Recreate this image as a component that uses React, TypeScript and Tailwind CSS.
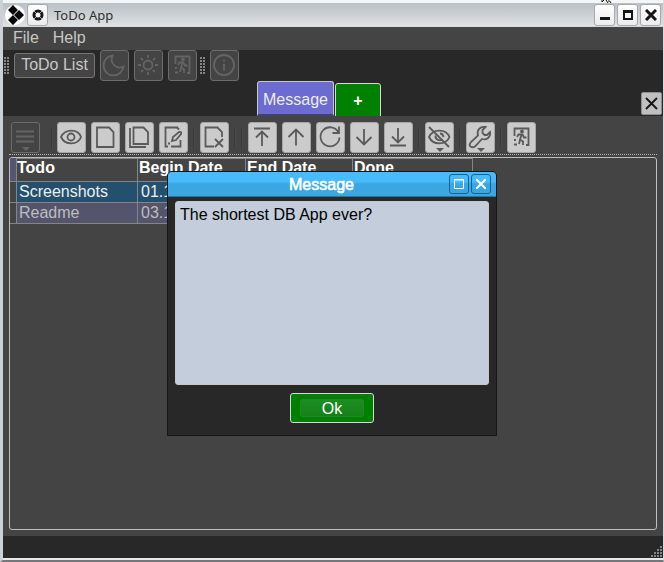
import type { ReactNode } from "react";

const drawings: Record<string, ReactNode> = {
  moon: <path d="M12.5 5.5A10 10 0 1 0 23.5 16.5C17 20 9 13 12.5 5.5z" />,
  sun: (
    <>
      <circle cx="14" cy="15" r="4.5" />
      <path d="M14 5v3M14 22v3M4 15h3M21 15h3M7 8l2 2M19 20l2 2M21 8l-2 2M9 20l-2 2" />
    </>
  ),
  exit: (
    <>
      <path d="M7.5 14V6.5h14V23H19M7 18h2M7 22.5h3" />
      <path d="M10 15l1.5-2.5h4l1.500 3h2.500M14.500 13L13 17.500l3 2V23M13 18l-1 4" />
      <circle cx="15" cy="9.500" r="1" />
    </>
  ),
  info: (
    <>
      <circle cx="14" cy="15" r="10" />
      <path d="M14 14v6.500M14 9.500v2" />
    </>
  ),
  list: (
    <>
      <path d="M5 9.500h18M5 14.500h18M5 19.500h18" />
      <path d="M11 25h8l-4 4z" fill="currentColor" stroke="none" />
    </>
  ),
  eye: (
    <>
      <path d="M4 15C8 6.500 21 6.500 24 15C21 23.500 8 23.500 4 15z" />
      <circle cx="14" cy="15" r="3.500" />
    </>
  ),
  page: <path d="M6 5.500h12l4.500 4.500v15H6z" />,
  pages: <path d="M8.500 5.500h10l4.500 4.500v12H8.500zM5 6v19h16" />,
  edit: (
    <>
      <path d="M19 5.500H6.500v19H9M12 24.500h9.500V18M18 5.500l2 2M9 21.500h2" />
      <path d="M13 19l1-4 6-5q3-.500 2 2l-5 6z" />
    </>
  ),
  remove: <path d="M14 24.500H5.500v-19h12l4.500 4.500v5M15 17l8 8M23 17l-8 8" />,
  top: <path d="M6 6.500h16M14 24V10M8 15.500l6-6 6 6" />,
  up: <path d="M14 23.500V8M6.500 15L14 7.500l7.500 7.500" />,
  refresh: <path d="M22.500 10.500a9.500 9.500 0 1 0 1 5M23 4.500v6.500h-6.500" />,
  down: <path d="M14 7v15.500M6.500 15l7.500 7.500 7.500-7.500" />,
  bottom: <path d="M14 6v14M8 14.500l6 6 6-6M6 23.500h16" />,
  hide: (
    <>
      <path d="M4 15C8 6.500 21 6.500 24.500 15C21 23.500 8 23.500 4 15zM4 5l20 20" />
      <path d="M10.500 13.500c-.500 4 4 6 7 4M15 11.500q3 0 3.500 3.500" />
      <path d="M11 26h8l-4 4z" fill="currentColor" stroke="none" />
    </>
  ),
  tool: (
    <>
      <path d="M12 13.500C10.500 8 14 4 19.500 5L16.500 8v3l2 2h2.500l3-3C25 15 20.500 18.500 16 17L9 24.500Q6.500 26 4.500 24.500t.500-4.500z" />
      <path d="M11 26h8l-4 4z" fill="currentColor" stroke="none" />
    </>
  ),
};

function ToolButton({ icon, label, dark = false }: { icon: string; label: string; dark?: boolean }) {
  return (
    <button
      type="button"
      aria-label={label}
      className={`h-[31px] w-[29px] shrink-0 rounded-[3px] border ${
        dark ? "border-[#6c6c6c] bg-[#444] text-[#646464]" : "border-[#a6a6a6] bg-[#cbcbcb] text-[#5a5a5a]"
      }`}
    >
      <svg viewBox="1 1 27 29" className="h-full w-full" fill="none" stroke="currentColor" strokeWidth="1.8">
        {drawings[icon]}
      </svg>
    </button>
  );
}

function Divider() {
  return <span className="h-5 w-[2px] shrink-0 border-l border-[#393939] bg-[#4a4a4a]" />;
}

function Grip() {
  return (
    <svg className="h-[18px] w-[6px] shrink-0" viewBox="0 0 6 18" aria-hidden="true">
      {[0, 3, 6, 9, 12, 15].map((y) => (
        <path key={y} d={`M0 ${y}h2v2h-2zM3 ${y}h2v2h-2z`} fill="#858585" />
      ))}
    </svg>
  );
}

const frameButton =
  "flex h-[22px] w-[21px] items-center justify-center rounded-[3px] border border-[#a4aab0] bg-linear-to-b from-white to-[#ececec] text-[#151515]";

function TitleBar() {
  return (
    <header className="flex h-[27px] shrink-0 items-center border-t-[3px] border-b border-t-[#f4f5f6] border-b-[#d5dadd] bg-linear-to-b from-[#b9c0c6] to-[#dfe1e3] px-[2px]">
      <svg viewBox="0 0 20 20" className="size-5" aria-hidden="true">
        <circle cx="10" cy="10" r="10" fill="#fff" />
        <path d="M8 0l5 5-5 5-5-5zM14 5l5 5-5 5-5-5zM8 10l5 5-5 5-5-5z" fill="#050505" />
      </svg>
      <button type="button" aria-label="Window menu" className={`${frameButton} ml-[2px]`}>
        <svg viewBox="0 0 12 12" className="size-3" fill="none" stroke="currentColor">
          <circle cx="6" cy="6" r="4" strokeWidth="3" />
          <path d="M2 2l2 2M10 2L8 4M2 10l2-2M10 10L8 8" stroke="#aaa" />
        </svg>
      </button>
      <h1 className="ml-[6px] grow pt-[2px] font-['Noto_Sans',sans-serif] text-[13px] text-[#303030]">ToDo App</h1>
      <div className="flex gap-[2px]">
        <button type="button" aria-label="Minimize" className={frameButton}>
          <svg viewBox="0 0 12 12" className="size-3"><path d="M1 8h10v3H1z" fill="currentColor" /></svg>
        </button>
        <button type="button" aria-label="Maximize" className={frameButton}>
          <svg viewBox="0 0 12 12" className="size-3" fill="none" stroke="currentColor" strokeWidth="2">
            <path d="M2 2h8v8H2zM1 3h10" />
          </svg>
        </button>
        <button type="button" aria-label="Close" className={frameButton}>
          <svg viewBox="0 0 12 12" className="size-3" stroke="currentColor" strokeWidth="3"><path d="M1 1l10 10M11 1L1 11" /></svg>
        </button>
      </div>
      <svg viewBox="0 0 12 4" className="absolute top-0 right-[50px] h-1 w-3" fill="none" stroke="#151515" aria-hidden="true">
        <path d="M1 0v2l2-2M5 0l2 3M7 1q2-1 3 2" />
      </svg>
    </header>
  );
}

const headCell = "border-t border-r border-b border-[#858585] text-left align-top leading-[18px] font-bold text-white";
const cell = "border-r border-b border-[#858585] pl-[2px] leading-5";
const dateCell = "border-r border-b border-[#858585] pl-[3px] leading-5";

function TodoTable() {
  return (
    <table className="w-[463px] table-fixed border-separate border-spacing-0">
      <colgroup>
        <col className="w-[7px]" />
        <col className="w-[121px]" />
        <col className="w-[108px]" />
        <col className="w-[107px]" />
        <col className="w-[120px]" />
      </colgroup>
      <thead>
        <tr className="h-6">
          <td className="border-r border-b border-[#858585] bg-[#565670]" />
          <th className={headCell}>Todo</th>
          <th className={`${headCell} pl-px`}>Begin Date</th>
          <th className={`${headCell} pl-px`}>End Date</th>
          <th className={`${headCell} pl-px`}>Done</th>
        </tr>
      </thead>
      <tbody>
        <tr className="h-[21px] bg-[#22506e] text-[#eee]">
          <td className="border-r border-b border-[#858585] bg-[#444]" />
          <td className={cell}>Screenshots</td>
          <td className={dateCell}>01.11.2024</td>
          <td className={cell} />
          <td className={cell} />
        </tr>
        <tr className="h-[21px] bg-[#54546c] text-[#bdbdbd]">
          <td className="border-r border-b border-[#858585] bg-[#444]" />
          <td className={cell}>Readme</td>
          <td className={dateCell}>03.11.2024</td>
          <td className={cell} />
          <td className={cell} />
        </tr>
      </tbody>
    </table>
  );
}

function MessageDialog() {
  const control = "flex size-5 items-center justify-center rounded-[3px] border border-[#176292] text-white";
  return (
    <div className="absolute inset-x-0 top-[171px] flex justify-center pr-[2px]">
      <section
        role="dialog"
        aria-labelledby="dialog-title"
        className="w-[330px] overflow-hidden rounded-t-[5px] border border-[#151515] bg-[#282828]"
      >
        <div className="flex h-[25px] items-center gap-[2px] border-b border-[#2377a8] bg-linear-to-b from-[#48bbfc] from-40% to-[#3ba7e2] to-50% pr-[5px] pl-7">
          <h2 id="dialog-title" className="grow pt-px text-center text-base text-white [-webkit-text-stroke:0.6px_white]">
            Message
          </h2>
          <button type="button" aria-label="Maximize dialog" className={control}>
            <svg viewBox="0 0 10 10" className="size-[10px]" fill="none" stroke="currentColor"><path d="M.5 .5h9v9h-9zM0 1h10" /></svg>
          </button>
          <button type="button" aria-label="Close dialog" className={control}>
            <svg viewBox="0 0 10 10" className="size-[10px]" stroke="currentColor" strokeWidth="2"><path d="M0 0l10 10M10 0L0 10" /></svg>
          </button>
        </div>
        <div className="flex flex-col items-center px-[7px] pt-1 pb-3">
          <textarea
            readOnly
            aria-labelledby="dialog-title"
            defaultValue="The shortest DB App ever?"
            className="h-[184px] w-full resize-none rounded-[3px] border border-[#c8c8c8] bg-[#c3cddb] px-1 py-px text-base text-black outline-none"
          />
          <button type="button" className="mt-2 h-[30px] w-[84px] rounded-[3px] border border-[#d8d8d8] bg-[#008000] px-[9px] text-base text-white">
            <span className="block h-[18px] rounded-[2px] border border-[#278529] bg-linear-to-b from-[#1d8e22] to-[#148019] leading-[18px]">Ok</span>
          </button>
        </div>
      </section>
    </div>
  );
}

export default function App() {
  return (
    <div className="relative flex h-screen min-h-[460px] flex-col border-r border-b-2 border-l-[3px] border-r-[#d5dadd] border-b-[#74767a] border-l-[#cbd1d7] bg-[#282828] font-['Liberation_Sans',Arial,sans-serif] text-base">
      <TitleBar />
      <nav className="flex h-[23px] shrink-0 items-center gap-[14px] bg-[#444] px-[10px] pb-[2px] text-[#c8c8c8]">
        <button type="button">File</button>
        <button type="button">Help</button>
      </nav>
      <div className="flex shrink-0 items-center gap-[5px] pl-px">
        <Grip />
        <button type="button" className="-ml-px h-[25px] w-[81px] rounded-[3px] border border-[#757575] bg-[#444] pb-[2px] leading-5 text-[#c8c8c8]">
          ToDo List
        </button>
        <ToolButton dark icon="moon" label="Dark theme" />
        <ToolButton dark icon="sun" label="Light theme" />
        <ToolButton dark icon="exit" label="Exit" />
        <div className="-ml-[2px]"><Grip /></div>
        <div className="-ml-px flex"><ToolButton dark icon="info" label="About" /></div>
      </div>
      <div className="flex h-[35px] shrink-0 items-end">
        <div className="w-[254px] shrink" />
        <div role="tablist" className="flex shrink-0 items-end gap-px">
          <button role="tab" aria-selected="true" className="h-[35px] w-[77px] rounded-t-[3px] border border-b-2 border-[#c8c8c8] border-b-[#414173] bg-[#6b6bd0] pt-[3px] text-[#eee]">
            Message
          </button>
          <button role="tab" aria-selected="false" aria-label="New tab" className="-mb-px h-[34px] w-[46px] rounded-t-[3px] border border-[#d8d8d8] bg-[#008000] pt-[2px] font-bold text-white">
            +
          </button>
        </div>
        <button type="button" aria-label="Close tab" className="mr-px mb-px ml-auto flex h-[23px] w-[21px] items-center justify-center rounded-[2px] border border-[#8f8f8f] bg-[#c0c0c0] text-[#151515]">
          <svg viewBox="0 0 13 13" className="size-[13px]" stroke="currentColor" strokeWidth="1.8"><path d="M1 1l11 11M12 1L1 12" /></svg>
        </button>
      </div>
      <main className="flex min-h-0 grow flex-col bg-[#444] p-[6px]">
        <div role="toolbar" aria-label="Record actions" className="flex shrink-0 items-center gap-[5px] border-b border-dotted border-[#b5b5b5] pb-px pl-[2px]">
          <ToolButton dark icon="list" label="Menu" />
          <div className="-mr-px ml-[6px] flex"><Divider /></div>
          <ToolButton icon="eye" label="View" />
          <ToolButton icon="page" label="New" />
          <ToolButton icon="pages" label="Copy" />
          <ToolButton icon="edit" label="Edit" />
          <Divider />
          <ToolButton icon="remove" label="Delete" />
          <Divider />
          <Divider />
          <ToolButton icon="top" label="First" />
          <ToolButton icon="up" label="Previous" />
          <ToolButton icon="refresh" label="Refresh" />
          <ToolButton icon="down" label="Next" />
          <ToolButton icon="bottom" label="Last" />
          <Divider />
          <ToolButton icon="hide" label="Hide" />
          <Divider />
          <ToolButton icon="tool" label="Settings" />
          <Divider />
          <ToolButton icon="exit" label="Close" />
        </div>
        <div className="mt-[2px] min-h-0 grow overflow-hidden rounded-[3px] border border-[#bebebe]">
          <TodoTable />
        </div>
      </main>
      <footer className="flex h-6 shrink-0 items-end justify-end border-b-2 border-[#e8e8ea]">
        <svg viewBox="0 0 12 12" className="size-3" fill="#858585" aria-hidden="true">
          <path d="M9 0h2v2H9zM6 3h2v2H6zM9 3h2v2H9zM3 6h2v2H3zM6 6h2v2H6zM9 6h2v2H9zM0 9h2v2H0zM3 9h2v2H3zM6 9h2v2H6zM9 9h2v2H9z" />
        </svg>
      </footer>
      <MessageDialog />
    </div>
  );
}
